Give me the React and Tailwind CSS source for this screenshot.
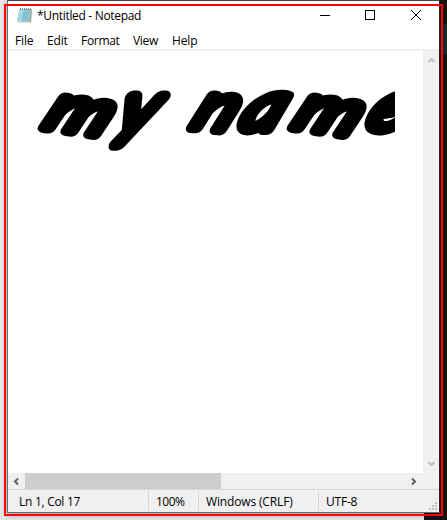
import React from "react";

function NotepadIcon() {
  return (
    <svg width="18" height="18" viewBox="0 0 18 18" className="shrink-0">
      <path d="M4 2L16 2.5L15 16H4L1 14Z" fill="#a9a18b" />
      <path d="M3.5 2H15L13.5 14.5H1Z" fill="#8bc9d9" />
      <path d="M3.5 2H8L5.5 14.5H1Z" fill="#b4e0e8" />
      <path d="M1 14.5L13.5 14.5L14.5 16H4Z" fill="#e5e1d3" />
      <path d="M4 5H13M3.5 7H13M3 9H12.5M2.5 11H12M2 13H12" stroke="#63a9bd" strokeWidth=".4" />
      <path d="M4 2H15" stroke="#53646b" strokeWidth="1.5" strokeDasharray="1 1" />
    </svg>
  );
}

function Chevron({ className, angle = 0 }) {
  return (
    <svg width="9" height="9" viewBox="0 0 9 9" className={className}>
      <path d="M1.5 6L4.5 3L7.5 6" transform={`rotate(${angle} 4.5 4.5)`} fill="none" stroke="currentColor" strokeWidth="2" />
    </svg>
  );
}

const letters = [
  { c: "m", t: "translate(34 76) skewY(8) skewX(-25) scale(1.13 .93)" },
  { c: "y", t: "translate(107 81) skewX(-21) scale(1.08 1.02)" },
  { c: "n", t: "translate(182 76) skewY(5) skewX(-25) scale(1.08 .95)" },
  { c: "a", t: "translate(230 78) skewX(-24) scale(1.12 .96)" },
  { c: "m", t: "translate(283 76) skewY(8) skewX(-25) scale(1.13 .93)" },
  { c: "e", t: "translate(357 78) skewX(-24) scale(1.15 .96)" },
];

function DisplayText() {
  return (
    <svg width="387" height="130" viewBox="0 0 387 130" className="block overflow-hidden" aria-label="my name">
      {letters.map((l, i) => (
        <text key={i} transform={l.t} x="0" y="0" fontFamily="Lato, sans-serif" fontStyle="italic" fontWeight="300" fontSize="69" stroke="#000" strokeWidth="12.5" strokeLinejoin="round">{l.c}</text>
      ))}
    </svg>
  );
}

export default function App() {
  return (
    <div className="relative h-[520px] w-[447px] overflow-hidden bg-[#e6e6e6] font-['Open_Sans','Noto_Sans',sans-serif] text-[12px] text-black">
      <div className="flex h-[520px]">
        <div className="w-[424px]" />
        <div className="flex-1 bg-[#141414] pt-6"><div className="h-[30px] bg-[#1b2731]" /></div>
      </div>
      <div className="absolute left-[7px] top-0 flex h-[513px] w-[433px] flex-col border border-[#6b6b6b] border-r-[#222] border-t-[#444] bg-white shadow-[0_2px_6px_#0005]">
        <header className="flex h-[30px] shrink-0 items-center pl-[8px]">
          <NotepadIcon />
          <span className="ml-[3px] whitespace-nowrap tracking-[-0.32px]">*Untitled - Notepad</span>
          <svg width="105" height="12" viewBox="0 0 105 12" className="relative -top-px ml-auto mr-[18px]" fill="none" stroke="#000" shapeRendering="crispEdges">
            <path d="M4 6.5H14M49.5 1.5H58.5V10.5H49.5Z" />
            <path d="M95 1L105 11M105 1L95 11" shapeRendering="auto" />
          </svg>
        </header>
        <nav className="flex h-5 shrink-0 items-center border-b-2 border-[#f0f0f0] pt-[2px] whitespace-nowrap">
          <span className="w-8 pl-[7px] tracking-[-0.15px]">File</span>
          <span className="w-[34px] pl-[7px] tracking-[-0.15px]">Edit</span>
          <span className="w-[52px] pl-[7px] tracking-[-0.3px]">Format</span>
          <span className="w-[39px] pl-[7px] tracking-[-0.3px]">View</span>
          <span className="pl-[7px] tracking-[-0.15px]">Help</span>
        </nav>
        <main className="flex min-h-0 flex-1">
          <div className="min-w-0 flex-1"><DisplayText /></div>
          <div className="flex w-4 flex-col items-center justify-between bg-[#f0f0f0] py-[5px] text-[#bfbfbf]">
            <Chevron /><Chevron angle={180} />
          </div>
        </main>
        <div className="flex h-4 shrink-0 items-center bg-[#f0f0f0] text-[#606060]">
          <div className="flex w-[17px] justify-center"><Chevron angle={-90} /></div>
          <div className="h-full w-[196px] bg-[#cdcdcd]" />
          <Chevron angle={90} className="ml-auto mr-[21px]" />
        </div>
        <footer className="flex h-[23px] shrink-0 items-center border-t border-[#d7d7d7] bg-[#f0f0f0] whitespace-nowrap">
          <span className="w-[140px] pl-[11px] pt-[2px] tracking-[-0.28px]">Ln 1, Col 17</span>
          <span className="h-5 w-[50px] border-l border-[#d7d7d7] pl-[7px] leading-[22px] tracking-[-0.5px]">100%</span>
          <span className="h-5 w-[120px] border-l border-[#d7d7d7] pl-[7px] leading-[22px] tracking-[-0.15px]">Windows (CRLF)</span>
          <span className="h-5 border-l border-[#d7d7d7] pl-[7px] leading-[22px] tracking-[-0.2px]">UTF-8</span>
          <svg width="8" height="8" className="mb-[2px] ml-auto mr-[2px] self-end" fill="#bfbfbf">
            <path d="M6 0h2v2h-2zM3 3h2v2h-2zM6 3h2v2h-2zM0 6h2v2h-2zM3 6h2v2h-2zM6 6h2v2h-2z" />
          </svg>
        </footer>
      </div>
      <div className="pointer-events-none absolute left-1 top-1 h-[512px] w-[439px] border-2 border-[#fe0000]" />
    </div>
  );
}
